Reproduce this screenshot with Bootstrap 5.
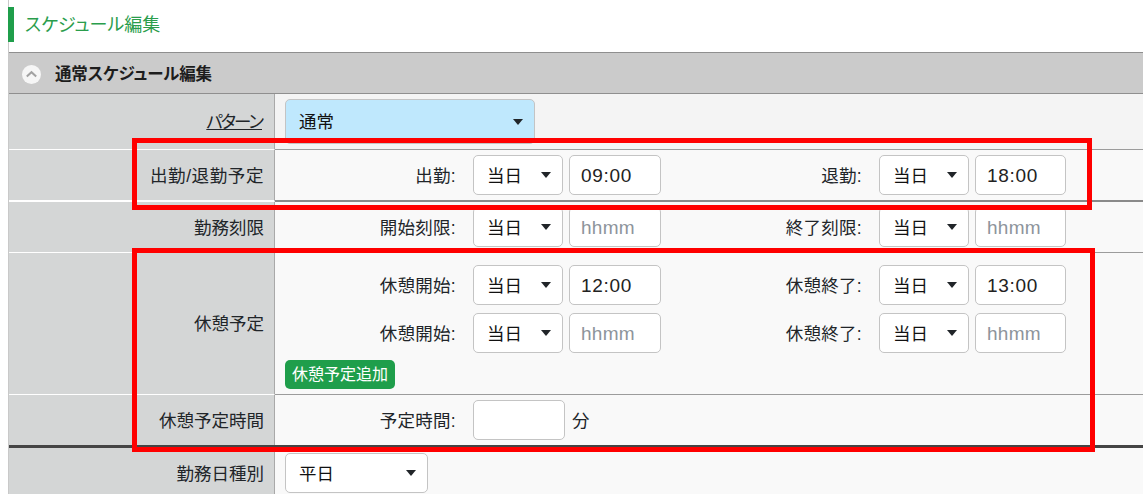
<!DOCTYPE html>
<html lang="ja">
<head>
<meta charset="utf-8">
<title>スケジュール編集</title>
<link href="https://cdn.jsdelivr.net/npm/bootstrap@5.3.0/dist/css/bootstrap.min.css" rel="stylesheet">
<style>
html,body{height:494px;overflow:hidden;background:#fff}
body{font-family:"Liberation Sans","Noto Sans CJK JP",sans-serif;font-size:17.5px;letter-spacing:0;color:#212529;position:relative}
.page-frame{margin-left:8px;border-left:1px solid #c9c9c9;height:494px}
.page-title{height:52px;padding-top:7px}
.title-mark{border-left:6px solid #1f9e4b;height:35px;padding-left:11px;margin-left:-1px;color:#2a9d4c;font-size:18px;line-height:36px;font-feature-settings:"palt"}
.sec-head{height:42px;background:#cbcbcb;border-top:1px solid #8f8f8f;border-bottom:1px solid #8f8f8f;padding:0 0 0 13px;gap:14px;font-size:16.5px;letter-spacing:-.15px;font-weight:700;color:#1d1d1d;font-feature-settings:"palt"}
.sec-text{padding-top:2px}
.sec-chev{width:19px;height:19px;flex:none;margin-top:2px}
.form-line{display:flex}
.line-key{width:266px;flex:none;background:#d4d6d6;border-right:1px solid #a9a9a9;text-align:right;padding:2px 10px 0 0;display:flex;align-items:center;justify-content:flex-end}
.line-val{flex:1;min-width:0;background:#f9f9f9;padding:5px 0 0 10px}
.l-pattern{height:56px}
.l-pattern .line-val{background:#f4f4f4;border-bottom:1px solid #9c9c9c}
.l-pattern .line-key{border-bottom:1px solid #fff}
.l-work{height:52px}
.l-work .line-key{border-bottom:2px solid #fff;letter-spacing:.6px}
.l-work .line-val{border-bottom:2px solid #8a8a8a;letter-spacing:0}
.l-limit{height:51px}
.l-limit .line-key{border-bottom:1px solid #fff}
.l-limit .line-val{border-bottom:1px solid #9c9c9c}
.l-rest{height:142px}
.l-rest .line-key{border-bottom:1px solid #fff}
.l-rest .line-val{border-bottom:1px solid #9c9c9c;padding-top:12px}
.l-time{height:53px;border-bottom:3px solid #454545}
.l-kind{height:50px}
.time-pair{display:flex;align-items:center;height:40px}
.time-pair + .time-pair{margin-top:8px}
.pair-a{width:171px}
.pair-b{width:201px}
.pair-key{text-align:right;flex:none;padding-top:2px;letter-spacing:.3px}
.pair-gap{margin-left:17px!important}
.fld-sel.form-select{height:40px;padding:2px 0 0 13px;font-size:17.5px;color:#111;border:1px solid #c4c4c4;border-radius:5px;background-color:#fff;background-size:10px 6px;background-position:right 11px center;background-image:url("data:image/svg+xml,%3Csvg xmlns='http://www.w3.org/2000/svg' viewBox='0 0 10 6'%3E%3Cpath fill='%23212529' d='M0 0h10L5 6z'/%3E%3C/svg%3E");font-family:inherit}
.sel-day{width:90px;flex:none}
.sel-pattern{width:250px;height:45px!important;background-color:#bfe8fd!important}
.sel-kind{width:143px}
.fld-txt.form-control{width:92px;flex:none;height:40px;margin-left:6px;padding:2px 0 0 11px;font-size:19px;letter-spacing:.7px;color:#222;border:1px solid #c4c4c4;border-radius:5px;font-family:inherit}
.fld-txt.fld-end.form-control{width:91px}
.fld-txt.form-control::placeholder{color:#8d949b;opacity:1;letter-spacing:.3px}
.add-rest{background:#1f9e4b;color:#fff;font-size:16px;font-weight:400;width:110px;height:29px;padding:0;border:0;border-radius:5px;margin-top:7px;display:block;line-height:29px}
.unit-txt{margin-left:7px;padding-top:2px}
.call-out{position:absolute;border:5px solid #f00;pointer-events:none}
.call-one{left:132px;top:138px;width:960px;height:72px}
.call-two{left:132px;top:248px;width:963px;height:204px}
.pat-link{color:#212529;text-decoration:underline;font-feature-settings:"palt";letter-spacing:-2px;padding-right:2px}
</style>
</head>
<body>
<div class="page-frame">
  <div class="page-title"><div class="title-mark">スケジュール編集</div></div>
  <div class="sec-head d-flex align-items-center">
    <svg class="sec-chev" viewBox="0 0 19 19"><circle cx="9.5" cy="9.5" r="9.5" fill="#f6f6f6"/><path d="M4.800 11.600 9.500 7.200l4.700 4.400" fill="none" stroke="#a2a2a2" stroke-width="2"/></svg>
    <span class="sec-text">通常スケジュール編集</span>
  </div>
  <div class="form-line l-pattern">
    <div class="line-key"><a class="pat-link" href="#">パターン</a></div>
    <div class="line-val"><select class="form-select fld-sel sel-pattern"><option>通常</option></select></div>
  </div>
  <div class="form-line l-work">
    <div class="line-key">出勤/退勤予定</div>
    <div class="line-val">
      <div class="time-pair">
        <span class="pair-key pair-a">出勤:</span><select class="form-select fld-sel sel-day pair-gap"><option>当日</option></select><input class="form-control fld-txt" value="09:00">
        <span class="pair-key pair-b">退勤:</span><select class="form-select fld-sel sel-day pair-gap"><option>当日</option></select><input class="form-control fld-txt fld-end" value="18:00">
      </div>
    </div>
  </div>
  <div class="form-line l-limit">
    <div class="line-key">勤務刻限</div>
    <div class="line-val">
      <div class="time-pair">
        <span class="pair-key pair-a">開始刻限:</span><select class="form-select fld-sel sel-day pair-gap"><option>当日</option></select><input class="form-control fld-txt" placeholder="hhmm">
        <span class="pair-key pair-b">終了刻限:</span><select class="form-select fld-sel sel-day pair-gap"><option>当日</option></select><input class="form-control fld-txt fld-end" placeholder="hhmm">
      </div>
    </div>
  </div>
  <div class="form-line l-rest">
    <div class="line-key">休憩予定</div>
    <div class="line-val">
      <div class="time-pair">
        <span class="pair-key pair-a">休憩開始:</span><select class="form-select fld-sel sel-day pair-gap"><option>当日</option></select><input class="form-control fld-txt" value="12:00">
        <span class="pair-key pair-b">休憩終了:</span><select class="form-select fld-sel sel-day pair-gap"><option>当日</option></select><input class="form-control fld-txt fld-end" value="13:00">
      </div>
      <div class="time-pair">
        <span class="pair-key pair-a">休憩開始:</span><select class="form-select fld-sel sel-day pair-gap"><option>当日</option></select><input class="form-control fld-txt" placeholder="hhmm">
        <span class="pair-key pair-b">休憩終了:</span><select class="form-select fld-sel sel-day pair-gap"><option>当日</option></select><input class="form-control fld-txt fld-end" placeholder="hhmm">
      </div>
      <button type="button" class="btn add-rest">休憩予定追加</button>
    </div>
  </div>
  <div class="form-line l-time">
    <div class="line-key">休憩予定時間</div>
    <div class="line-val">
      <div class="time-pair">
        <span class="pair-key pair-a">予定時間:</span><input class="form-control fld-txt pair-gap"><span class="unit-txt">分</span>
      </div>
    </div>
  </div>
  <div class="form-line l-kind">
    <div class="line-key">勤務日種別</div>
    <div class="line-val"><select class="form-select fld-sel sel-kind"><option>平日</option></select></div>
  </div>
</div>
<div class="call-out call-one"></div>
<div class="call-out call-two"></div>
<script src="https://cdn.jsdelivr.net/npm/bootstrap@5.3.0/dist/js/bootstrap.bundle.min.js"></script>
</body>
</html>
